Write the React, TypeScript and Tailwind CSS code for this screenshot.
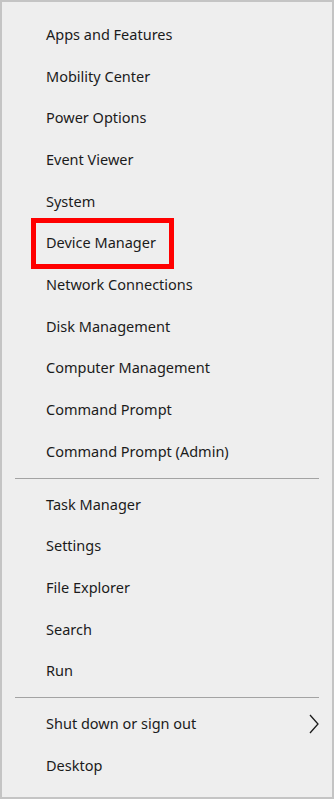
import { ReactNode } from 'react';

const groupOne = [
  'Apps and Features',
  'Mobility Center',
  'Power Options',
  'Event Viewer',
  'System',
  'Device Manager',
  'Network Connections',
  'Disk Management',
  'Computer Management',
  'Command Prompt',
  'Command Prompt (Admin)',
];

const groupTwo = ['Task Manager', 'Settings', 'File Explorer', 'Search', 'Run'];

function Row({ label, children }: { label: string; children?: ReactNode }) {
  return (
    <div className="relative flex h-[41.7px] items-center pl-[44px] text-[14.5px] text-[#1b1b1b]">
      <span>{label}</span>
      {children}
    </div>
  );
}

function Divider() {
  return (
    <div className="flex h-[11px] items-center px-[13px]">
      <div className="h-px w-full bg-[#a3a3a3]" />
    </div>
  );
}

export default function App() {
  return (
    <div
      className="h-[799px] w-[334px] border-2 border-[#c4c4c4] bg-[#eeeeee] pt-[12px]"
      style={{ fontFamily: '"Segoe UI", "Noto Sans", "Open Sans", sans-serif' }}
    >
      {groupOne.map((item) => (
        <Row key={item} label={item}>
          {item === 'Device Manager' && (
            <div className="absolute left-[29px] top-[-4px] h-[51px] w-[143px] border-[5px] border-[#ff0000]" />
          )}
        </Row>
      ))}
      <Divider />
      {groupTwo.map((item) => (
        <Row key={item} label={item} />
      ))}
      <Divider />
      <Row label="Shut down or sign out">
        <svg
          className="absolute right-[13px] top-[11px]"
          width="10"
          height="20"
          viewBox="0 0 10 20"
          fill="none"
          stroke="#1b1b1b"
          strokeWidth="1.3"
        >
          <path d="M1 1 L9 10 L1 19" />
        </svg>
      </Row>
      <Row label="Desktop" />
    </div>
  );
}
